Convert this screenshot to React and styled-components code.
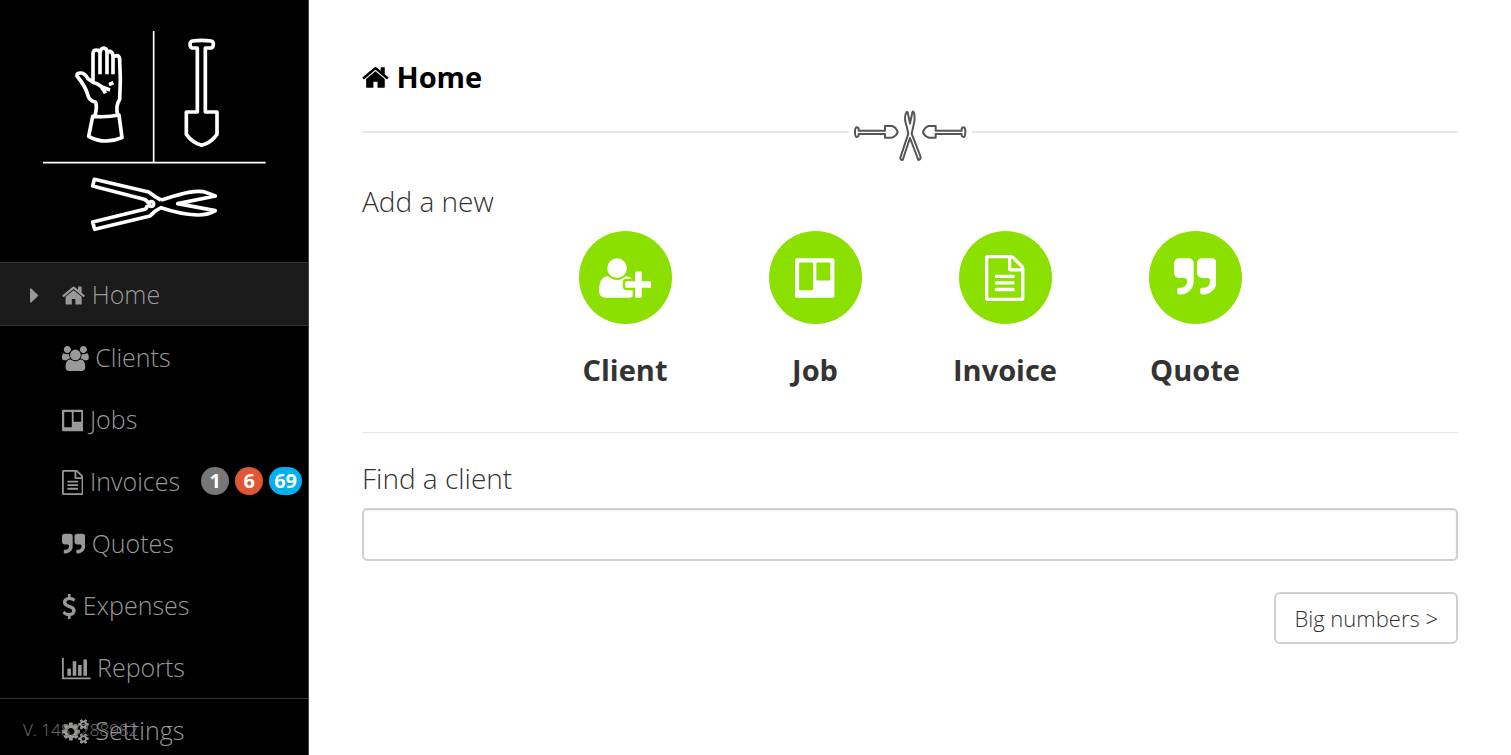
import React, { Component } from 'react';
import styled, { createGlobalStyle } from 'styled-components';

const GlobalStyle = createGlobalStyle`
*{
    box-sizing: border-box;
}
body{
    margin: 0;
    background: #fff;
    color: #333;
    font-family: "Open Sans", "Noto Sans", sans-serif;
    font-weight: 300;
}
`

//every glyph sits on a 1792 unit em, only the width differs
const icons = {
    home: {
        x: 64, width: 1664,
        d: "M1472 992v480q0 26-19 45t-45 19h-384v-384h-256v384h-384q-26 0-45-19t-19-45v-480q0-1 .5-3t.5-3l575-474 575 474q1 2 1 6zm223-69l-62 74q-8 9-21 11h-3q-13 0-21-7l-692-577-692 577q-12 8-24 7-13-2-21-11l-62-74q-8-10-7-23.5t11-21.5l719-599q32-26 76-26t76 26l244 204v-195q0-14 9-23t23-9h192q14 0 23 9t9 23v408l219 182q10 8 11 21.5t-7 23.5z"
    },
    users: {
        x: 0, width: 1920,
        d: "M593 896q-162 5-265 128h-134q-82 0-138-40.5t-56-118.5q0-353 124-353 6 0 43.5 21t97.5 42.5 119 21.5q67 0 133-23-5 37-5 66 0 139 81 256zm1071 637q0 120-73 189.5t-194 69.5h-874q-121 0-194-69.5t-73-189.5q0-53 3.5-103.5t14-109 26.5-108.5 43-97.5 62-81 85.5-53.5 111.5-20q10 0 43 21.5t73 48 107 48 135 21.5 135-21.5 107-48 73-48 43-21.5q61 0 111.5 20t85.5 53.5 62 81 43 97.5 26.5 108.5 14 109 3.5 103.5zm-1024-1277q0 106-75 181t-181 75-181-75-75-181 75-181 181-75 181 75 75 181zm704 384q0 159-112.5 271.5t-271.5 112.5-271.5-112.5-112.5-271.5 112.5-271.5 271.5-112.5 271.5 112.5 112.5 271.5zm576 225q0 78-56 118.5t-138 40.5h-134q-103-123-265-128 81-117 81-256 0-29-5-66 66 23 133 23 59 0 119-21.5t97.5-42.5 43.5-21q124 0 124 353zm-128-609q0 106-75 181t-181 75-181-75-75-181 75-181 181-75 181 75 75 181z"
    },
    board: {
        x: 0, width: 1536,
        d: "M64 128h1408q26 0 45 19t19 45v1408q0 26-19 45t-45 19h-1408q-26 0-45-19t-19-45v-1408q0-26 19-45t45-19zM192 288q-32 0-32 32v1024q0 32 32 32h480q32 0 32-32v-1024q0-32-32-32zM864 288q-32 0-32 32v640q0 32 32 32h480q32 0 32-32v-640q0-32-32-32z"
    },
    file: {
        x: 0, width: 1536,
        d: "M1468 380q28 28 48 76t20 88v1152q0 40-28 68t-68 28h-1344q-40 0-68-28t-28-68v-1600q0-40 28-68t68-28h896q40 0 88 20t76 48zM1024 136v376h376q-10-29-22-41l-313-313q-12-12-41-22zM1408 1664v-1024h-416q-40 0-68-28t-28-68v-416h-768v1536zM384 800q0-14 9-23t23-9h704q14 0 23 9t9 23v64q0 14-9 23t-23 9h-704q-14 0-23-9t-9-23zM1120 1024q14 0 23 9t9 23v64q0 14-9 23t-23 9h-704q-14 0-23-9t-9-23v-64q0-14 9-23t23-9zM1120 1280q14 0 23 9t9 23v64q0 14-9 23t-23 9h-704q-14 0-23-9t-9-23v-64q0-14 9-23t23-9z"
    },
    quote: {
        x: 64, width: 1664,
        d: "M832 320v704q0 104-40.5 198.5t-109.5 163.5-163.5 109.5-198.5 40.5h-64q-26 0-45-19t-19-45v-128q0-26 19-45t45-19h64q106 0 181-75t75-181v-32q0-40-28-68t-68-28h-224q-80 0-136-56t-56-136v-384q0-80 56-136t136-56h384q80 0 136 56t56 136zm896 0v704q0 104-40.5 198.5t-109.5 163.5-163.5 109.5-198.5 40.5h-64q-26 0-45-19t-19-45v-128q0-26 19-45t45-19h64q106 0 181-75t75-181v-32q0-40-28-68t-68-28h-224q-80 0-136-56t-56-136v-384q0-80 56-136t136-56h384q80 0 136 56t56 136z"
    },
    dollar: {
        x: 384, width: 1024,
        d: "M1362 1185q0 153-99.5 263.5t-258.5 136.5v175q0 14-9 23t-23 9h-135q-13 0-22.5-9.5t-9.5-22.5v-175q-66-9-127.5-31t-101.5-44.5-74-48-46.5-37.5-17.5-18q-17-21-2-41l103-135q7-10 23-12 15-2 24 9l2 2q113 99 243 125 37 8 74 8 81 0 142.5-43t61.5-122q0-28-15-53t-33.5-42-58.5-37.5-66-32-80-32.5q-39-16-61.5-25t-61.5-26.5-62.5-31-56.5-35.5-53.5-42.5-43.5-49-35.5-58-21-66.5-8.5-78q0-138 98-242t255-134v-180q0-13 9.5-22.5t22.5-9.5h135q14 0 23 9t9 23v176q57 6 110.5 23t87 33.5 63.5 37.5 39 29 15 14q17 18 5 38l-81 146q-8 15-23 16-14 3-27-7-3-3-14.5-12t-39-26.5-58.5-32-74.5-26-85.5-11.5q-95 0-155 43t-60 111q0 26 8.5 48t29.5 41.5 39.5 33 56 31 60.5 27 70 27.5q53 20 81 31.5t76 35 75.5 42.5 62 50 53 63.5 31.5 76.5 13 94z"
    },
    chart: {
        x: 0, width: 2048,
        d: "M640 896v512h-256v-512h256zm384-512v1024h-256v-1024h256zm1024 1152v128h-2048v-1536h128v1408h1920zm-640-896v768h-256v-768h256zm384-384v1152h-256v-1152h256z"
    },
    cogs: {
        x: 0, width: 1920,
        d: "M896 896q0-106-75-181t-181-75-181 75-75 181 75 181 181 75 181-75 75-181zm768 512q0-52-38-90t-90-38-90 38-38 90q0 53 37.5 90.5t90.5 37.5 90.5-37.5 37.5-90.5zm0-1024q0-52-38-90t-90-38-90 38-38 90q0 53 37.5 90.5t90.5 37.5 90.5-37.5 37.5-90.5zm-384 421v185q0 10-7 19.5t-16 10.5l-155 24q-11 35-32 76 34 48 90 115 7 11 7 20 0 12-7 19-23 30-82.5 89.5t-78.5 59.5q-11 0-21-7l-115-90q-37 19-77 31-11 108-23 155-7 24-30 24h-186q-11 0-20-7.5t-10-17.5l-23-153q-34-10-75-31l-118 89q-7 7-20 7-11 0-21-8-144-133-144-160 0-9 7-19 10-14 41-53t47-61q-23-44-35-82l-152-24q-10-1-17-9.5t-7-19.5v-185q0-10 7-19.5t16-10.5l155-24q11-35 32-76-34-48-90-115-7-11-7-20 0-12 7-20 22-30 82-89t79-59q11 0 21 7l115 90q34-18 77-32 11-108 23-154 7-24 30-24h186q11 0 20 7.5t10 17.5l23 153q34 10 75 31l118-89q8-7 20-7 11 0 21 8 144 133 144 160 0 8-7 19-12 16-42 54t-45 60q23 48 34 82l152 23q10 2 17 10.5t7 19.5zm640 533v140q0 16-149 31-12 27-30 52 51 113 51 138 0 4-4 7-122 71-124 71-8 0-46-47t-52-68q-20 2-30 2t-30-2q-14 21-52 68t-46 47q-2 0-124-71-4-3-4-7 0-25 51-138-18-25-30-52-149-15-149-31v-140q0-16 149-31 13-29 30-52-51-113-51-138 0-4 4-7 4-2 35-20t59-34 30-16q8 0 46 46.5t52 67.5q20-2 30-2t30 2q51-71 92-112l6-2q4 0 124 70 4 3 4 7 0 25-51 138 17 23 30 52 149 15 149 31zm0-1024v140q0 16-149 31-12 27-30 52 51 113 51 138 0 4-4 7-122 71-124 71-8 0-46-47t-52-68q-20 2-30 2t-30-2q-14 21-52 68t-46 47q-2 0-124-71-4-3-4-7 0-25 51-138-18-25-30-52-149-15-149-31v-140q0-16 149-31 13-29 30-52-51-113-51-138 0-4 4-7 4-2 35-20t59-34 30-16q8 0 46 46.5t52 67.5q20-2 30-2t30 2q51-71 92-112l6-2q4 0 124 70 4 3 4 7 0 25-51 138 17 23 30 52 149 15 149 31z"
    },
    userPlus: {
        x: 0, width: 2048,
        d: "M704 896q-159 0-271.5-112.5t-112.5-271.5 112.5-271.5 271.5-112.5 271.5 112.5 112.5 271.5-112.5 271.5-271.5 112.5zm960 128h352q13 0 22.5 9.5t9.5 22.5v192q0 13-9.5 22.5t-22.5 9.5h-352v352q0 13-9.5 22.5t-22.5 9.5h-192q-13 0-22.5-9.5t-9.5-22.5v-352h-352q-13 0-22.5-9.5t-9.5-22.5v-192q0-13 9.5-22.5t22.5-9.5h352v-352q0-13 9.5-22.5t22.5-9.5h192q13 0 22.5 9.5t9.5 22.5v352zm-736 224q0 52 38 90t90 38h256v238q-68 50-171 50h-874q-121 0-194-69t-73-190q0-53 3.5-103.5t14-109 26.5-108.5 43-97.5 62-81 85.5-53.5 111.5-20q19 0 39 17 79 61 154.5 91.5t164.5 30.5 164.5-30.5 154.5-91.5q20-17 39-17 132 0 217 96h-223q-52 0-90 38t-38 90v192z"
    },
    caret: {
        x: 0, width: 640,
        d: "M576 896q0 26-19 45l-448 448q-19 19-45 19t-45-19-19-45v-896q0-26 19-45t45-19 45 19l448 448q19 19 19 45z"
    }
};

function Icon({ name, className }) {
    const icon = icons[name];
    return (
        <Glyph className={className} viewBox={`${icon.x} 0 ${icon.width} 1792`} aria-hidden="true">
            <path fillRule="evenodd" d={icon.d} />
        </Glyph>
    );
}

const menu = [
    { icon: 'home', title: 'Home', active: true },
    { icon: 'users', title: 'Clients' },
    { icon: 'board', title: 'Jobs' },
    {
        icon: 'file', title: 'Invoices', badges: [
            { count: 1, color: '#777' },
            { count: 6, color: '#e05735' },
            { count: 69, color: '#00b0f0' }
        ]
    },
    { icon: 'quote', title: 'Quotes' },
    { icon: 'dollar', title: 'Expenses' },
    { icon: 'chart', title: 'Reports' },
    { icon: 'cogs', title: 'Settings', divided: true }
];

const shortcuts = [
    { icon: 'userPlus', title: 'Client' },
    { icon: 'board', title: 'Job' },
    { icon: 'file', title: 'Invoice' },
    { icon: 'quote', title: 'Quote' }
];

export default class App extends Component {
    render() {
        return (
            <Page>
                <GlobalStyle />
                <Sidebar />
                <Main>
                    <Title><Icon name="home" /> Home</Title>
                    <Divider><Ornament /></Divider>
                    <Subtitle>Add a new</Subtitle>
                    <Shortcuts>
                        {shortcuts.map(item => (
                            <Shortcut href="#" key={item.title}>
                                <Circle><Icon name={item.icon} /></Circle>
                                {item.title}
                            </Shortcut>
                        ))}
                    </Shortcuts>
                    <Rule />
                    <Label htmlFor="client">Find a client</Label>
                    <SearchInput id="client" type="text" />
                    <Actions>
                        <Button type="button">Big numbers &gt;</Button>
                    </Actions>
                </Main>
            </Page>
        );
    }
}

class Sidebar extends Component {
    render() {
        return (
            <SidebarWrapper>
                <Logo />
                <nav>
                    <MenuList>
                        {menu.map(item => (
                            <MenuItem key={item.title} $active={item.active} $divided={item.divided}>
                                <MenuLink href="#">
                                    <Marker>{item.active && <Icon name="caret" />}</Marker>
                                    <span><Icon name={item.icon} /> {item.title}</span>
                                    {item.badges && (
                                        <Badges>
                                            {item.badges.map(badge => (
                                                <Badge key={badge.count} $color={badge.color}>{badge.count}</Badge>
                                            ))}
                                        </Badges>
                                    )}
                                </MenuLink>
                            </MenuItem>
                        ))}
                    </MenuList>
                </nav>
                <Version>V. 1483288982</Version>
            </SidebarWrapper>
        );
    }
}

//glove, spade and shears
function Logo() {
    return (
        <LogoSvg viewBox="0 0 750 675" role="img" aria-label="Logo">
            <path strokeWidth="5" d="M371 33V427M39 428H707" />
            <g strokeWidth="11">
                <path d="M188 289L176 349Q222 375 276 353L267 285Q230 293 188 289Z" />
                <path d="M195 286Q202 262 197 247Q180 243 175 230Q168 200 141 168Q139 158 154 159Q164 160 174 176L189 187V100Q190 89 200 90Q210 90 210 100V163M210 98Q213 83 222 84Q231 86 231 97V163M231 100Q234 93 241 94Q249 98 249 108V163M252 112Q256 105 263 107Q269 110 269 119Q273 180 269 238Q256 258 263 285" />
                <path d="M189 187Q204 191 216 201L240 210M214 202Q222 209 226 220M237 194L250 188" />
                <path d="M502 276V84H486Q480 82 480 72Q481 64 487 63Q515 59 543 63Q550 64 550 73Q550 82 544 84H526V276H561V343Q543 368 515 376Q487 368 469 343V276Z" />
                <path d="M393 540Q375 531 356 516L193 478L188 498L342 538Q352 541 354 550M393 540C440 526 500 505 530 518L556 528L443 551L556 572Q533 586 501 585Q450 582 393 563Q375 571 360 588L194 628L188 606L344 568Q352 564 352 554" />
                <circle cx="364" cy="552" r="7" />
            </g>
        </LogoSvg>
    );
}

function Ornament() {
    return (
        <OrnamentSvg viewBox="27 5 369 180" aria-hidden="true">
            <path d="M56 91V85Q55 81 50 81Q45 82 45 95Q45 109 50 110Q56 109 56 105V101H135V112H156Q169 107 173 96Q169 81 156 77H135V91Z" />
            <path d="M365 91V85Q366 81 371 81Q376 82 376 95Q376 109 371 110Q365 109 365 105V101H287V112H266Q253 107 249 96Q253 81 266 77H287V91Z" />
            <path d="M205 100L200 78Q192 55 197 41Q200 32 203 36L210 70L217 36Q220 30 223 41Q226 60 220 78L215 100L242 170Q242 178 235 179L210 113L188 179Q181 180 181 172Z" />
        </OrnamentSvg>
    );
}

const Page = styled.div`
display: flex;
min-height: 100vh;
`

const Glyph = styled.svg`
height: 1em;
width: auto;
fill: currentColor;
vertical-align: -0.14em;
`

const SidebarWrapper = styled.aside`
position: relative;
flex: 0 0 309px;
height: 100vh;
padding-top: 20px;
overflow: hidden;
background: #000;
border-right: 1px solid #444;
`

const LogoSvg = styled.svg`
display: block;
width: 250px;
height: 225px;
margin: 0 0 17px 30px;
fill: none;
stroke: #fff;
stroke-linejoin: round;
`

const MenuList = styled.ul`
margin: 0;
padding: 0;
list-style: none;
`

const MenuItem = styled.li`
background: ${props => props.$active ? "#1b1b1b" : "transparent"};
border-top: ${props => props.$active || props.$divided ? "1px solid #333" : "0"};
border-bottom: ${props => props.$active ? "1px solid #333" : "0"};
`

const MenuLink = styled.a`
display: flex;
align-items: center;
height: 62px;
padding: 0 6px 0 30px;
color: #999;
font-size: 25px;
text-decoration: none;
white-space: nowrap;
`

const Marker = styled.span`
flex: 0 0 32px;
`

const Badges = styled.span`
display: flex;
gap: 6px;
margin-left: auto;
`

const Badge = styled.span`
min-width: 28px;
height: 28px;
padding: 0 5px;
border-radius: 14px;
background: ${props => props.$color};
color: #fff;
font-size: 20px;
font-weight: 700;
line-height: 28px;
text-align: center;
`

//stays pinned under the menu, over whatever item is there
const Version = styled.small`
position: absolute;
left: 23px;
bottom: 13px;
color: #777;
font-size: 17px;
line-height: 24px;
`

const Main = styled.main`
flex: 1;
min-width: 0;
padding: 57px 53px 40px;
`

const Title = styled.h1`
margin: 0 0 5px;
color: #000;
font-size: 29px;
font-weight: 700;
line-height: 40px;
`

const Divider = styled.div`
display: flex;
align-items: center;
margin-bottom: 19px;
&:before, &:after{
    content: "";
    flex: 1;
    border-top: 2px solid #e8e8e8;
}
`

const OrnamentSvg = styled.svg`
width: 123px;
height: 60px;
fill: #fff;
stroke: #555;
stroke-width: 6;
stroke-linejoin: round;
`

const Subtitle = styled.h2`
margin: 0 0 10px;
font-size: 28px;
font-weight: 300;
line-height: 40px;
`

const Shortcuts = styled.div`
display: grid;
grid-template-columns: repeat(6, 1fr);
margin: 0 -22px 42px;
`

const Shortcut = styled.a`
display: flex;
flex-direction: column;
align-items: center;
gap: 26px;
color: #333;
font-size: 29px;
font-weight: 700;
line-height: 40px;
text-decoration: none;
&:first-child{
    grid-column-start: 2;
}
`

const Circle = styled.span`
display: flex;
align-items: center;
justify-content: center;
width: 93px;
height: 93px;
border-radius: 50%;
background: #8be000;
color: #fff;
font-size: 46px;
`

const Rule = styled.hr`
margin: 0 0 25px;
border: 0;
border-top: 1px solid #e8e8e8;
`

const Label = styled.label`
display: block;
margin-bottom: 10px;
font-size: 28px;
line-height: 40px;
`

const SearchInput = styled.input`
display: block;
width: 100%;
height: 53px;
padding: 0 16px;
border: 2px solid #d0d0d0;
border-radius: 5px;
box-shadow: inset 0 1px 2px rgba(0, 0, 0, 0.08);
color: #333;
font: inherit;
font-size: 24px;
&:focus{
    outline: none;
}
`

const Actions = styled.div`
display: flex;
justify-content: flex-end;
margin-top: 31px;
`

const Button = styled.button`
height: 52px;
padding: 0 18px;
border: 2px solid #d0d0d0;
border-radius: 6px;
background: #fff;
color: #333;
font: inherit;
font-size: 22px;
cursor: pointer;
`
